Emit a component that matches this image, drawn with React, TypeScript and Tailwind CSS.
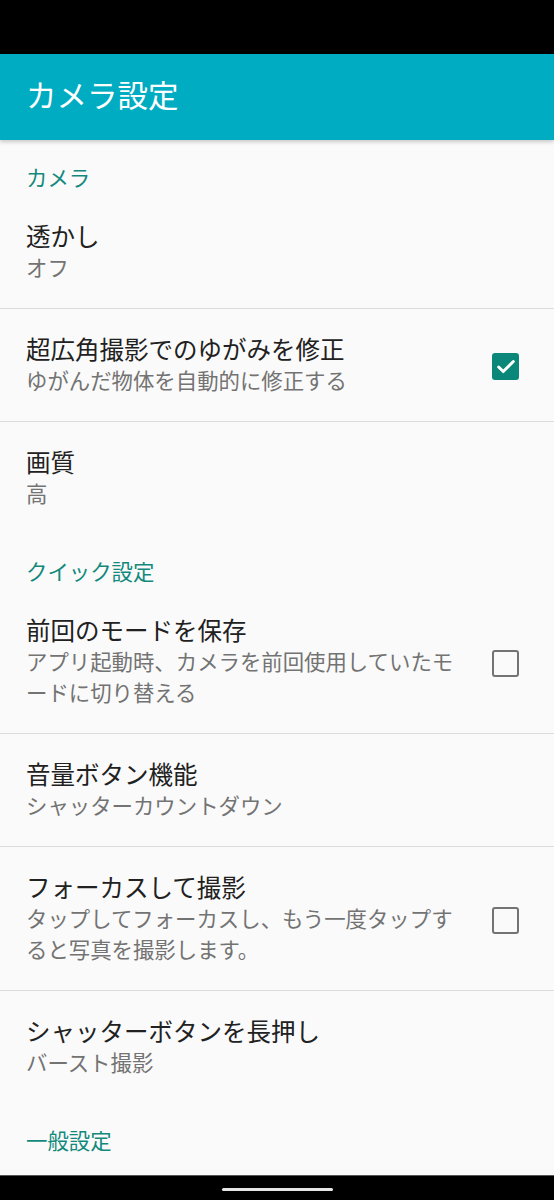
import { Check } from "lucide-react";

type Item = {
  title: string;
  summary: string;
  checkbox?: boolean;
  checked?: boolean;
  divider?: boolean;
};

const sections: { header: string; items: Item[] }[] = [
  {
    header: "カメラ",
    items: [
      { title: "透かし", summary: "オフ", divider: true },
      {
        title: "超広角撮影でのゆがみを修正",
        summary: "ゆがんだ物体を自動的に修正する",
        checkbox: true,
        checked: true,
        divider: true,
      },
      { title: "画質", summary: "高" },
    ],
  },
  {
    header: "クイック設定",
    items: [
      {
        title: "前回のモードを保存",
        summary: "アプリ起動時、カメラを前回使用していたモードに切り替える",
        checkbox: true,
        divider: true,
      },
      { title: "音量ボタン機能", summary: "シャッターカウントダウン", divider: true },
      {
        title: "フォーカスして撮影",
        summary: "タップしてフォーカスし、もう一度タップすると写真を撮影します。",
        checkbox: true,
        divider: true,
      },
      { title: "シャッターボタンを長押し", summary: "バースト撮影" },
    ],
  },
  { header: "一般設定", items: [] },
];

function CheckBox({ checked }: { checked?: boolean }) {
  if (checked) {
    return (
      <div className="ml-[26px] flex h-[27px] w-[27px] shrink-0 items-center justify-center rounded-[3px] bg-[#0b877a]">
        <Check className="h-[22px] w-[22px] text-white" strokeWidth={3.2} />
      </div>
    );
  }
  return (
    <div className="ml-[26px] h-[27px] w-[27px] shrink-0 rounded-[3px] border-[2.5px] border-[#737373]" />
  );
}

function PrefRow({ item }: { item: Item }) {
  return (
    <div
      className={`flex items-center pl-[26px] pr-[35px] pt-[27px] pb-[24px] ${
        item.divider ? "border-b border-[#dcdcdc]" : ""
      }`}
    >
      <div className="min-w-0 flex-1">
        <div className="text-[24.5px] leading-[30px] text-[#212121]">{item.title}</div>
        <div className="text-[21.4px] leading-[31px] text-[#737373]">{item.summary}</div>
      </div>
      {item.checkbox && <CheckBox checked={item.checked} />}
    </div>
  );
}

export default function App() {
  return (
    <div className="flex h-[1200px] w-[554px] flex-col overflow-hidden bg-[#fafafa] font-['Roboto','Noto_Sans_CJK_JP',sans-serif]">
      {/* status bar */}
      <div className="h-[54px] shrink-0 bg-black" />

      {/* app bar */}
      <div className="relative z-10 flex h-[86px] shrink-0 items-center bg-[#00acc1] px-[26px] shadow-[0_2px_4px_rgba(0,0,0,0.2)]">
        <h1 className="text-[30.5px] font-normal leading-none text-white">カメラ設定</h1>
      </div>

      {/* preference list */}
      <div className="min-h-0 flex-1 overflow-hidden">
        {sections.map((section) => (
          <div key={section.header}>
            <div className="pl-[26px] pt-[24px] pb-[2px] text-[21.4px] leading-[30px] text-[#12897c]">
              {section.header}
            </div>
            {section.items.map((item) => (
              <PrefRow key={item.title} item={item} />
            ))}
          </div>
        ))}
      </div>

      {/* nav bar */}
      <div className="flex h-[25px] shrink-0 justify-center border-t border-[#555] bg-black pt-[12px]">
        <div className="h-[3px] w-[111px] rounded-full bg-[#e6e6e6]" />
      </div>
    </div>
  );
}
